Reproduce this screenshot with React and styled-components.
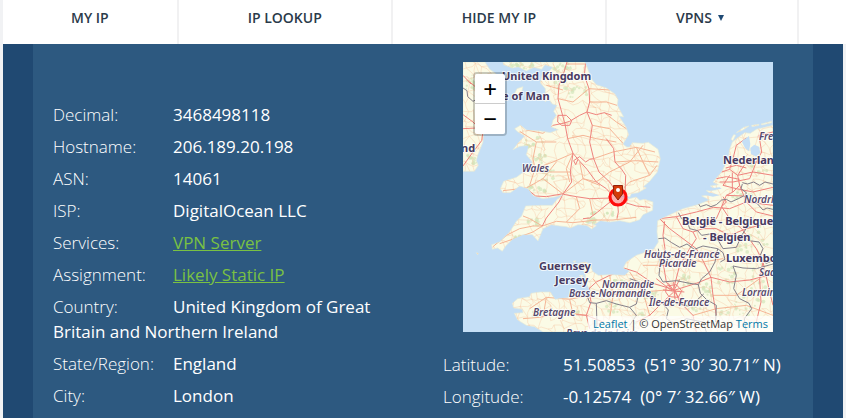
import React from "react";
import styled, { createGlobalStyle } from "styled-components";

const GlobalStyle = createGlobalStyle`
  *, *::before, *::after { box-sizing: border-box; }
  body {
    margin: 0;
    background: #f1f2f4;
    font-family: "Open Sans", "Noto Sans", sans-serif;
  }
`;

const Page = styled.div`
  display: flex;
  flex-direction: column;
  min-height: 100vh;
  padding-left: 3px;
`;

const Nav = styled.nav`
  display: flex;
  height: 44px;
  background: #fff;
  overflow: hidden;
`;

const NavLink = styled.a`
  display: flex;
  align-items: center;
  flex: none;
  gap: 6px;
  padding: 0 69px 8px;
  border-right: 2px solid #f1f1f2;
  color: #2b3a4a;
  font-size: 14px;
  font-weight: 600;
  line-height: 20px;
  text-decoration: none;
  white-space: nowrap;

  &:first-child {
    padding-left: 68px;
    padding-right: 68px;
  }
`;

const Caret = styled.svg`
  width: 6px;
  height: 6px;
  margin-right: 4px;
  fill: #1f4a74;
`;

const Hero = styled.main`
  display: flex;
  flex: 1;
  margin-right: 3px;
  padding: 0 30px;
  background: #204972;
`;

const Panel = styled.div`
  display: grid;
  grid-template-columns: 1fr 1fr;
  flex: 1;
  background: #2d5980;
`;

const Column = styled.section`
  padding: ${(p) => (p.$top ? `${p.$top}px` : 0)} 20px 0;
`;

const Facts = styled.dl`
  margin: 0;
  color: #fff;
  font-size: 17px;
  line-height: 25px;
`;

const Fact = styled.div`
  margin-bottom: 7px;
  white-space: ${(p) => (p.$single ? "nowrap" : "normal")};
`;

const Term = styled.dt`
  display: inline-block;
  width: 120px;
  font-weight: 300;
`;

const Detail = styled.dd`
  display: inline;
  margin: 0;
  font-weight: 400;
`;

const GreenLink = styled.a`
  color: #7ac143;
  text-decoration: underline;
`;

const Degrees = styled.span`
  margin-left: 9px;
`;

const MapBox = styled.div`
  position: relative;
  margin: 0 20px 20px;
  overflow: hidden;
`;

const MapDrawing = styled.svg`
  display: block;
  width: 100%;
  height: auto;
`;

const PlaceName = styled.text`
  font-family: "Noto Sans", sans-serif;
  font-size: ${(p) => (p.$region ? 10 : 11)}px;
  font-style: ${(p) => (p.$region ? "italic" : "normal")};
  font-weight: ${(p) => (p.$region ? 600 : 700)};
  fill: ${(p) => (p.$region ? "#57496b" : "#483a61")};
  stroke: rgba(255, 255, 255, 0.75);
  stroke-width: 2px;
  stroke-linejoin: round;
  paint-order: stroke;
`;

const ZoomControls = styled.div`
  position: absolute;
  top: 10px;
  left: 10px;
  display: flex;
  flex-direction: column;
  border: 2px solid rgba(0, 0, 0, 0.2);
  border-radius: 4px;
  background-clip: padding-box;
`;

const ZoomButton = styled.button`
  width: 30px;
  height: 30px;
  padding: 0;
  border: 0;
  border-bottom: ${(p) => (p.$divided ? "1px solid #ccc" : "0")};
  border-radius: ${(p) => (p.$divided ? "2px 2px 0 0" : "0 0 2px 2px")};
  background: #fff;
  color: #000;
  font: 22px / 30px "DejaVu Sans Mono", monospace;
  cursor: pointer;
`;

const Attribution = styled.div`
  position: absolute;
  right: 0;
  bottom: 0;
  padding: 0 5px;
  background: rgba(255, 255, 255, 0.7);
  color: #333;
  font-size: 11px;
  line-height: 16px;
  white-space: nowrap;

  a {
    color: #0078a8;
    text-decoration: none;
  }
`;

const LAND = [
  // Great Britain
  "M365 0 372 14 385 50 400 68 430 78 455 95 465 112 463 130 482 165 468 162 489 195 497 218 480 246 491 255 500 255 508 242 540 244 556 241 585 262 592 290 583 330 560 358 541 374 550 378 525 392 505 395 498 410 520 405 530 415 545 412 570 420 569 445 540 458 530 473 500 482 470 476 440 480 412 476 396 486 380 480 370 490 345 488 322 498 310 494 290 492 265 488 240 500 232 520 225 537 208 518 180 518 150 530 128 552 118 568 104 558 88 562 86 548 110 540 140 510 160 478 176 462 188 432 240 430 268 430 284 410 304 396 276 405 240 410 212 402 195 380 170 372 142 392 120 392 112 380 122 358 160 346 182 330 198 326 208 300 190 278 198 250 170 253 150 263 168 240 185 222 162 208 155 200 172 190 192 205 232 207 262 212 286 203 265 195 270 175 280 160 272 148 282 130 268 126 258 112 246 119 247 80 232 62 238 38 258 28 270 16 246 8 236 22 212 16 190 27 166 14 148 18 122 8 120 0Z",
  // Ireland
  "M0 0 66 0 80 22 100 36 110 70 90 92 72 84 66 120 48 150 62 200 60 240 44 280 40 296 46 310 34 328 0 328Z",
  // Isle of Man
  "M154 96 162 80 180 74 176 90 160 104Z",
  // Isle of Wight
  "M368 488 386 483 400 491 386 501Z",
  // Continent
  "M930 190 905 196 880 202 862 214 845 212 826 226 808 240 800 262 796 290 776 330 750 360 766 368 742 372 760 384 730 386 748 398 716 402 740 414 704 428 660 440 604 466 584 476 582 510 586 540 572 562 520 580 490 600 481 618 500 626 486 640 440 638 406 640 388 628 384 608 368 600 346 604 366 632 370 664 386 696 366 706 340 698 310 708 276 712 262 690 232 690 204 694 200 704 164 710 148 724 152 738 178 742 180 752 154 754 164 774 190 790 215 794 240 810 930 810Z",
  // Frisian islands
  "M804 232 812 218 818 219 810 236ZM820 212 842 196 858 192 840 204ZM866 190 888 187 888 190 867 194ZM894 186 926 178 926 182 896 189Z",
  // Channel Islands
  "M330 598 338 596 336 602ZM348 640 360 640 358 647ZM40 572 46 574 44 578Z",
];

const WATER = [
  "M836 238 858 222 862 246 858 268 846 258ZM862 258 874 248 888 254 892 272 880 284 864 276Z",
  "M500 410 480 406 468 405 480 402 500 404Z",
  "M716 396 744 392 770 400 750 404ZM726 380 770 376 776 380 740 386Z",
];

const WOODS = [
  [130, 8, 34, 12], [190, 12, 28, 10], [345, 92, 26, 16], [300, 60, 24, 30], [300, 12, 26, 12],
  [210, 240, 26, 14], [225, 300, 20, 24], [256, 340, 18, 14], [225, 380, 26, 8], [210, 480, 16, 10],
  [170, 528, 14, 6], [420, 455, 32, 6], [385, 476, 14, 6], [878, 520, 32, 26], [840, 555, 30, 16],
  [890, 640, 26, 60], [790, 640, 24, 22], [660, 655, 24, 14], [690, 730, 20, 18], [860, 710, 46, 30],
  [730, 690, 18, 22], [560, 700, 24, 10], [540, 770, 26, 16], [450, 740, 18, 14], [310, 750, 36, 6],
  [230, 755, 26, 8], [890, 310, 24, 20], [840, 400, 28, 10], [20, 60, 14, 20], [30, 280, 16, 22],
  [812, 760, 40, 22], [470, 660, 18, 8],
];

const MOTORWAYS = [
  "M312 0 300 40 288 70 285 110 296 150 306 186 314 230 330 274 345 292 372 322 400 360 430 380 446 398",
  "M368 0 364 40 378 80 380 120 372 150 388 190 380 240 392 290 408 330 440 360 464 396",
  "M270 190 300 184 320 178 350 160 372 150 400 158 424 152 446 160",
  "M285 160 310 160 326 176 320 190 296 190 284 180Z",
  "M330 274 322 330 326 360 300 396 288 420 272 440 250 468 238 492",
  "M195 384 218 402 250 404 296 396 340 404 380 410 446 408",
  "M345 292 338 308 332 296 350 284 368 300 380 292 392 290",
  "M464 424 466 450 462 470 M446 416 404 450 380 468 360 470 M480 420 520 432 562 436 M486 396 488 340 476 322 456 300 452 260 430 230",
  "M438 404 446 384 470 378 490 392 494 414 478 430 450 430Z",
  "M0 158 30 180 60 210 56 236 30 270 0 312 M0 200 40 198 60 208 M20 60 44 80 70 84 M0 40 24 66",
  "M590 470 620 500 660 530 700 560 M590 470 640 464 700 450 752 436 M605 478 600 520 606 560 600 600 610 660 628 686",
  "M640 464 660 500 690 510 720 500 760 470 776 434 790 400 M690 510 700 530 680 560 650 610 632 680",
  "M700 560 722 600 744 646 700 664 636 684 570 664 520 630 482 618 M744 646 800 660 860 654 930 636 M744 646 750 700 760 760",
  "M636 684 650 720 690 760 700 810 M632 690 600 720 560 760 520 780 M628 688 580 650 M636 680 650 652",
  "M610 672 640 668 656 686 646 706 618 704 608 690Z M600 684 664 690 M632 660 636 712 M616 664 650 710",
  "M370 760 384 720 378 680 400 660 440 640 480 626 M340 758 370 760 420 780 M370 760 380 800",
  "M720 500 760 500 800 520 850 500 930 480 M776 434 800 470 836 500 880 560 900 600 M752 436 800 440 850 420 930 430",
  "M776 330 800 322 824 340 830 370 810 390 790 400 M800 322 810 290 820 250 850 228 M824 340 870 330 930 340",
  "M770 360 810 360 860 350 880 300 896 270 888 220 930 210 M824 340 850 300 880 300 930 296 M800 340 780 370 820 380 870 390 930 376",
  "M760 350 790 344 830 352 M788 318 820 310 850 318 M808 332 808 390 M830 370 850 420 880 450 930 462 M790 400 840 402",
  "M776 434 790 420 780 404 M900 600 870 580 M900 600 920 690 930 730 M900 600 890 650 894 720 880 780",
];

const MAIN_ROADS = [
  "M90 554 130 520 170 500 210 492 238 492 M110 545 160 528 210 510 238 492 M238 492 200 470 180 462 M238 492 280 478 330 482 400 474 450 474 520 466",
  "M190 204 240 214 270 190 M170 208 220 240 210 290 216 320 200 370 M220 240 280 240 M216 320 270 300 330 274 M120 386 190 378 240 350 280 300 M240 350 300 396",
  "M388 190 440 200 480 244 M392 290 450 270 520 256 576 270 M456 300 520 296 586 300 M464 396 500 360 560 340 582 310 M520 256 540 300 560 340",
  "M400 360 440 330 500 300 540 250 M314 230 360 220 400 230 460 240 M300 396 360 350 400 360 M340 404 350 440 310 480 M380 410 390 460",
  "M285 110 330 120 378 80 440 84 M300 40 364 40 M380 120 430 120 462 130 M424 152 460 180 490 200 M250 70 300 84 M312 6 368 6",
  "M200 740 250 706 320 712 380 700 M180 770 230 766 300 750 370 760 M250 706 240 766 M320 712 330 756",
  "M390 650 420 690 470 700 540 690 610 684 M440 640 450 700 440 770 M500 630 540 690 560 760",
  "M660 590 720 600 780 590 M650 610 600 610 540 610 M690 760 760 740 850 730 930 760 M750 700 820 700 890 650",
  "M330 274 310 320 320 360 M350 300 360 350 410 370 M200 325 260 330 322 330",
];

const BORDERS = [
  "M0 78 12 86 14 104 30 118 44 110 62 124",
  "M586 530 606 528 626 542 650 556 672 546 694 562 720 552 742 556 764 560 780 572 786 592 772 600",
  "M646 452 656 470 672 476 680 500 704 506 716 520 740 516 752 530 766 536",
  "M704 422 712 434 730 428 744 434 760 428 776 414 790 412 804 420 826 410 842 402 866 416 882 424 900 444 912 438 930 442",
  "M838 362 854 366 872 360 890 370 906 360 930 366 M838 366 834 380 850 392 846 404",
  "M766 536 780 560 820 556 836 520 856 490 846 470 M836 520 858 536 888 540 900 560 888 590 910 604 930 596",
  "M586 560 592 600 588 640 600 660 640 656 680 664 706 668 712 694 730 712",
  "M764 560 756 600 740 630 716 650 706 668 M640 724 676 732 700 716 722 696",
  "M810 612 820 640 812 680 830 710 858 724 866 740 844 770 850 810 M810 612 840 618 880 620 930 606",
  "M372 700 380 722 400 724 430 716 460 726 500 736 520 726 M400 724 402 790 390 810 M520 726 526 700 540 688 530 660 500 650",
  "M500 736 520 760 500 790 M600 726 616 744 610 770 640 790 M640 790 670 770 720 780 730 810 M730 712 760 730 758 780",
];

const PLACES = [
  { x: 39, y: 18, name: "United Kingdom" },
  { x: 39, y: 38, name: "e of Man" },
  { x: -2, y: 90, name: "nd" },
  { x: 59, y: 110, name: "Wales", region: true },
  { x: 296, y: 78, name: "Fre", region: true },
  { x: 260, y: 102, name: "Nederlan" },
  { x: 281, y: 141, name: "Nordrhein", region: true },
  { x: 219, y: 163, name: "België - Belgique" },
  { x: 240, y: 179, name: "- Belgien" },
  { x: 181, y: 196, name: "Hauts-de-France", region: true },
  { x: 196, y: 205, name: "Picardie", region: true },
  { x: 263, y: 200, name: "Luxembourg" },
  { x: 296, y: 214, name: "Saar", region: true },
  { x: 76, y: 208, name: "Guernsey" },
  { x: 92, y: 222, name: "Jersey" },
  { x: 139, y: 226, name: "Normandie", region: true },
  { x: 106, y: 235, name: "Basse-Normandie", region: true },
  { x: 279, y: 234, name: "Lorraine", region: true },
  { x: 186, y: 244, name: "Île-de-France", region: true },
  { x: 70, y: 254, name: "Bretagne", region: true },
  { x: 103, y: 275, name: "Pays de la Loire", region: true },
];

// Irregular mesh of country lanes; a fixed hash keeps it the same on each render.
const jitter = (a, b, k) => {
  const v = Math.sin(a * 127.1 + b * 311.7 + k * 74.7) * 43758.5453;
  return v - Math.floor(v);
};

const buildLanes = (step) => {
  const node = (i, j) => [
    Math.round((i + jitter(i, j, 1) * 0.8) * step),
    Math.round((j + jitter(i, j, 2) * 0.8) * step),
  ];
  const parts = [];
  for (let i = -1; i * step < 930; i += 1) {
    for (let j = -1; j * step < 810; j += 1) {
      const [x, y] = node(i, j);
      const targets = [[i + 1, j], [i, j + 1], [i + 1, j + 1]];
      targets.forEach(([a, b], k) => {
        if (jitter(i, j, k + 3) > (k === 2 ? 0.35 : 0.75)) return;
        const [tx, ty] = node(a, b);
        const mx = Math.round((x + tx) / 2 + (jitter(i, j, k + 7) - 0.5) * 12);
        const my = Math.round((y + ty) / 2 + (jitter(i, j, k + 9) - 0.5) * 12);
        parts.push(`M${x} ${y}L${mx} ${my}L${tx} ${ty}`);
      });
    }
  }
  return parts.join("");
};

const LANES = buildLanes(27);

function RegionMap() {
  return (
    <MapDrawing viewBox="0 0 310 270" role="img" aria-label="Map of southern Britain">
      <defs>
        <clipPath id="land">
          <path d={LAND.join("")} />
        </clipPath>
      </defs>
      <rect width="310" height="270" fill="#c5dff6" />
      <g transform="scale(0.33333)" fill="none" strokeLinejoin="round">
        <path d={LAND.join("")} fill="#fbfbe6" stroke="#e4ead9" strokeWidth="2" />
        <g clipPath="url(#land)">
          {WOODS.map(([x, y, rx, ry]) =>
            [0, 1, 2, 3, 4, 5, 6, 7, 8, 9, 10, 11, 12, 13].map((k) => (
              <circle
                key={`${x}-${y}-${k}`}
                cx={x + (jitter(x, y, k) - 0.5) * rx * 2.2}
                cy={y + (jitter(y, x, k) - 0.5) * ry * 2.2}
                r={2 + jitter(x, k, y) * 4}
                fill="#d3e5bb"
                opacity="0.7"
              />
            ))
          )}
          <path d={LANES} stroke="#f7c6a2" strokeWidth="2" opacity="0.6" />
          <path d={MAIN_ROADS.join("")} stroke="#f5b596" strokeWidth="3" />
          <path d={MOTORWAYS.join("")} stroke="#ee837d" strokeWidth="3" />
          <path d={BORDERS.join("")} stroke="#85808a" strokeWidth="3" />
        </g>
        <path d={WATER.join("")} fill="#c5dff6" />
      </g>
      {PLACES.map((p) => (
        <PlaceName key={p.name} x={p.x} y={p.y} $region={p.region}>
          {p.name}
        </PlaceName>
      ))}
      <circle cx="155" cy="135" r="8" fill="#ff0033" fillOpacity="0.3" stroke="#ff0a0a" strokeWidth="3" />
      <path d="M150.500 123.500h9v8.500l-4.500 6-4.500-6z" fill="#d43a08" stroke="#94210a" />
      <circle cx="155" cy="128" r="2" fill="#fff" />
    </MapDrawing>
  );
}

const LEFT_FACTS = [
  ["Decimal:", "3468498118"],
  ["Hostname:", "206.189.20.198"],
  ["ASN:", "14061"],
  ["ISP:", "DigitalOcean LLC"],
  ["Services:", <GreenLink href="#vpn-server">VPN Server</GreenLink>],
  ["Assignment:", <GreenLink href="#static-ip">Likely Static IP</GreenLink>],
  ["Country:", "United Kingdom of Great Britain and Northern Ireland"],
  ["State/Region:", "England"],
  ["City:", "London"],
];

const RIGHT_FACTS = [
  ["Latitude:", <>51.50853<Degrees>(51° 30′ 30.71″ N)</Degrees></>],
  ["Longitude:", <>-0.12574<Degrees>(0° 7′ 32.66″ W)</Degrees></>],
];

function FactList({ items, single }) {
  return (
    <Facts>
      {items.map(([label, value]) => (
        <Fact key={label} $single={single}>
          <Term>{label}</Term>
          <Detail>{value}</Detail>
        </Fact>
      ))}
    </Facts>
  );
}

export default function App() {
  return (
    <>
      <GlobalStyle />
      <Page>
        <Nav>
          <NavLink href="#my-ip">MY IP</NavLink>
          <NavLink href="#ip-lookup">IP LOOKUP</NavLink>
          <NavLink href="#hide-my-ip">HIDE MY IP</NavLink>
          <NavLink href="#vpns">
            VPNS
            <Caret viewBox="0 0 6 6" aria-hidden="true">
              <path d="M0 0h6L3 6z" />
            </Caret>
          </NavLink>
        </Nav>
        <Hero>
          <Panel>
            <Column $top={58}>
              <FactList items={LEFT_FACTS} />
            </Column>
            <Column $top={18}>
              <MapBox>
                <RegionMap />
                <ZoomControls>
                  <ZoomButton type="button" aria-label="Zoom in" $divided>+</ZoomButton>
                  <ZoomButton type="button" aria-label="Zoom out">−</ZoomButton>
                </ZoomControls>
                <Attribution>
                  <a href="#leaflet">Leaflet</a> | © OpenStreetMap <a href="#terms">Terms</a>
                </Attribution>
              </MapBox>
              <FactList items={RIGHT_FACTS} single />
            </Column>
          </Panel>
        </Hero>
      </Page>
    </>
  );
}
